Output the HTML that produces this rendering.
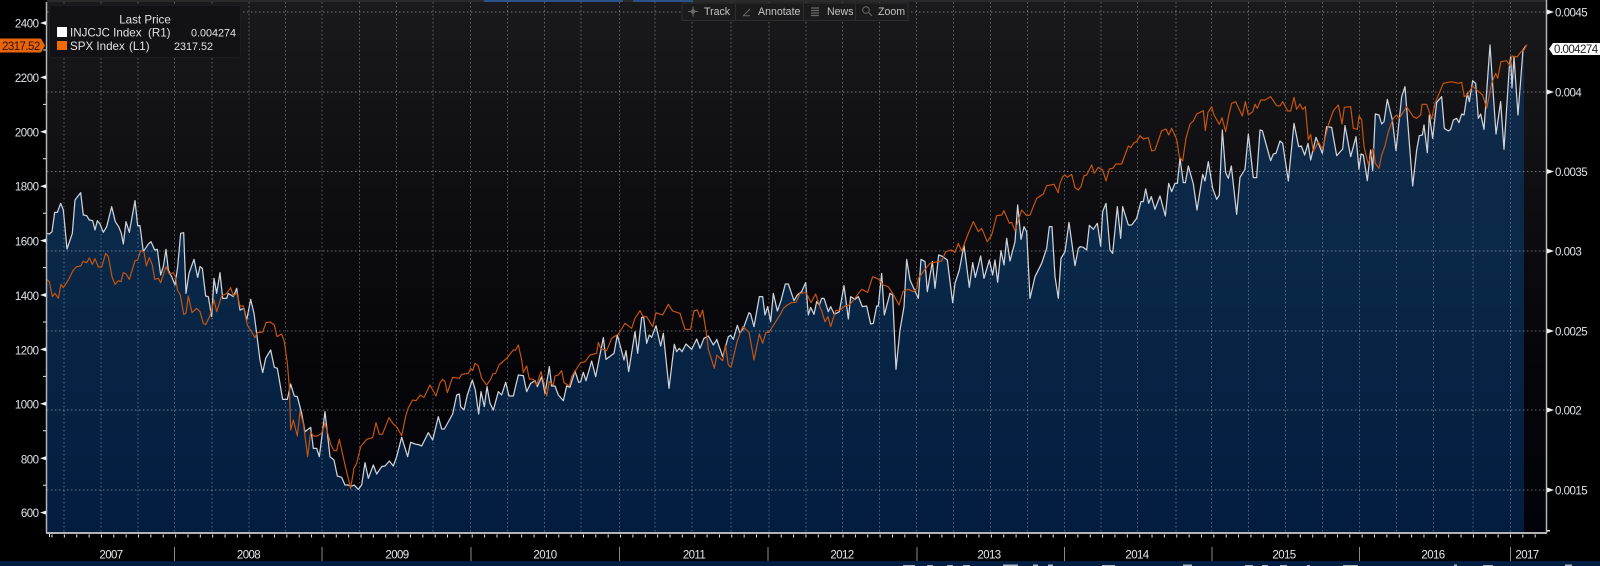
<!DOCTYPE html>
<html><head><meta charset="utf-8"><style>
html,body{margin:0;padding:0;background:#000;width:1600px;height:566px;overflow:hidden}
svg{display:block}
text{font-family:"Liberation Sans",sans-serif}
.a{font-size:11.5px;fill:#dfe3e8;letter-spacing:-.5px}
.y{font-size:11.5px;fill:#e4e6ea;letter-spacing:-.6px;text-anchor:middle}
.t{font-size:10.6px;fill:#c4c4c4}
.l{font-size:10.8px;fill:#e2e2e2}
.m{font-size:11.6px;fill:#e2e2e2}
</style></head><body>
<svg width="1600" height="566" viewBox="0 0 1600 566" xmlns="http://www.w3.org/2000/svg">
<defs>
<linearGradient id="bg" gradientUnits="userSpaceOnUse" x1="0" y1="0" x2="0" y2="532"><stop offset="0" stop-color="#1a1a1c"/><stop offset=".2" stop-color="#131316"/><stop offset=".45" stop-color="#0c0c10"/><stop offset=".7" stop-color="#050509"/><stop offset="1" stop-color="#02030a"/></linearGradient>
<linearGradient id="bl" gradientUnits="userSpaceOnUse" x1="0" y1="40" x2="0" y2="532"><stop offset="0" stop-color="#132a49"/><stop offset=".4" stop-color="#0a2848"/><stop offset="1" stop-color="#021d3f"/></linearGradient>
<clipPath id="c">
<path transform="translate(40 170) scale(.33333)" d="M20 190L28 192 36 185 44 127 52 127 62 100 70 120 81 237 97 190 105 90 122 68 130 135 140 137 148 150 158 152 165 180 172 152 180 162 190 187 200 170 215 110 226 155 236 170 244 190 250 222 258 155 268 187 285 92 293 167 300 167 310 245 325 222 333 215 344 240 352 238 362 315 370 290 378 238 385 300 395 320 405 345 413 290 422 190 431 188 438 370 447 310 462 268 473 322 480 290 487 295 497 378 505 380 515 440 522 325 530 370 540 308 548 385 560 385 565 370 580 380 590 355 600 420 612 415 620 450 632 388 642 430 650 490 660 570 668 608 677 565 692 540 703 592 712 595 728 688 742 688 752 642 763 678 772 680 785 730 795 785 812 772 820 835 830 835 838 860 855 725 870 860 882 870 892 918 905 922 915 945 925 945 932 950 942 945 955 958 965 945 975 878 985 925 1000 885 1010 912 1025 890 1035 888 1048 873 1060 888 1070 860 1085 802 1103 860 1112 817 1125 822 1140 825l6 0V1500H20Z"/>
<path transform="translate(340 260) scale(.33333)" d="M240 556L245 558 265 518 278 540 295 470 305 507 313 507 338 462 350 405 358 402 362 440 372 450 382 405 397 360 406 390 416 462 423 395 433 440 441 380 450 430 460 450 475 395 485 405 497 367 507 408 520 408 535 345 550 347 560 395 572 370 585 362 592 380 605 350 615 400 628 320 635 378 645 378 655 405 670 422 680 378 690 382 705 333 716 367 722 365 730 337 738 362 755 303 767 350 790 233 798 298 822 280 832 225 852 300 858 272 866 335 885 215 893 280 905 172 911 172 920 250 928 225 935 232 948 197 962 258 970 220 987 385 1003 253 1010 275 1018 265 1026 275 1038 252 1055 268 1070 237 1080 265 1092 235 1105 228 1120 255 1130 240l6 0V1500H240Z"/>
<path transform="translate(700 180) scale(.33333)" d="M50 478L68 530 85 470 92 466 100 478 112 436 120 460 130 445 147 398 152 402 162 440 178 350 188 350 195 405 203 380 212 425 220 340 232 393 243 362 256 312 265 312 282 362 292 345 305 335 317 308 325 405 332 382 342 403 350 365 358 375 365 355 372 355 385 395 392 380 403 403 418 395 432 317 445 417 452 350 465 358 475 350 487 380 500 378 512 432 520 430 530 378 535 378 545 280 553 405 570 340 578 345 588 568 600 450 612 380 620 238 630 300 640 322 655 355 663 238 675 245 682 335 697 245 705 325 716 225 725 228 742 240 758 368 765 310 778 270 792 195 808 322 818 248 826 292 842 228 852 295 868 240 878 285 885 240 893 307 903 212 912 255 920 175 930 243 945 185 953 75 963 178 972 140 980 155 990 355 1005 290 1025 250 1040 205 1048 140 1056 140 1065 290 1075 355 1083 235 1095 215 1107 127 1125 257 1135 205l8 0V1500H50Z"/>
<path transform="translate(1060 40) scale(.33333)" d="M60 620L70 622 80 630 88 556 100 568 112 550 122 618 128 515 138 490 150 630 158 640 172 500 182 595 188 500 205 555 215 555 230 535 243 485 250 485 257 447 266 490 274 470 285 508 300 468 316 528 326 430 335 455 345 430 352 430 360 355 370 428 376 428 385 378 400 432 411 510 428 403 435 423 445 365 458 445 470 478 478 465 487 270 497 398 505 415 514 378 530 523 540 412 555 388 565 282 580 413 590 413 600 270 607 272 632 362 640 342 648 340 660 303 668 310 685 423 702 250 716 320 724 318 734 345 744 310 752 360 768 292 787 340 800 260 815 262 830 347 848 327 855 257 872 350 888 290 897 388 903 342 910 345 922 422 932 330 938 392 946 222 957 225 965 252 972 245 982 178 997 240 1008 332 1025 170 1035 140 1058 438 1070 330 1078 287 1087 285 1092 255 1102 338 1108 225 1118 295 1130 187 1145 170 1153 265 1165 273 1172 268 1180 240 1190 235 1197 248 1205 222 1212 225 1222 160 1228 185 1238 122 1247 130 1255 235 1262 222 1272 268 1290 15 1308 282 1322 185 1332 328 1348 80 1352 51 1356 144 1362 51 1374 225 1389 30 1397 18V1500H60Z"/>
</clipPath>
</defs>

<rect width="1600" height="566" fill="#000"/>
<rect x="47" y="0" width="1500" height="532" fill="url(#bg)"/>
<rect x="47" y="0" width="1477" height="532" fill="url(#bl)" clip-path="url(#c)"/>

<!-- top strip -->
<rect x="47" y="0" width="1500" height="2" fill="#2a2a2b"/>
<rect x="484" y="0" width="139" height="2" fill="#2a5489"/>
<rect x="633" y="0" width="60" height="2" fill="#2a5489"/>

<!-- grid -->
<path d="M47 12H1546M47 92H1546M47 171.500H1546M47 251H1546M47 331H1546M47 410H1546M47 490H1546" stroke="#fff" stroke-opacity=".42" stroke-width="1" stroke-dasharray="1.500 2.500" fill="none"/>
<path d="M64 2V532M101 2V532M138 2V532M174.500 2V532M212 2V532M249 2V532M285.500 2V532M322 2V532M359.500 2V532M396.500 2V532M433 2V532M470.500 2V532M507.500 2V532M544.500 2V532M581 2V532M619.500 2V532M655 2V532M692 2V532M731 2V532M769 2V532M806 2V532M842.500 2V532M879.500 2V532M916.500 2V532M953.500 2V532M990.500 2V532M1027.500 2V532M1064.500 2V532M1101 2V532M1137.500 2V532M1176 2V532M1211.500 2V532M1248.500 2V532M1285.500 2V532M1322.500 2V532M1359.500 2V532M1396.500 2V532M1433.500 2V532M1473 2V532M1510.500 2V532" stroke="#fff" stroke-opacity=".33" stroke-width="1" stroke-dasharray="1.500 2.500" fill="none"/>

<!-- white series -->
<g fill="none" stroke="#cfd4da" stroke-width="3.700" stroke-linejoin="round" stroke-linecap="round">
<path transform="translate(40 170) scale(.33333)" d="M20 190L28 192 36 185 44 127 52 127 62 100 70 120 81 237 97 190 105 90 122 68 130 135 140 137 148 150 158 152 165 180 172 152 180 162 190 187 200 170 215 110 226 155 236 170 244 190 250 222 258 155 268 187 285 92 293 167 300 167 310 245 325 222 333 215 344 240 352 238 362 315 370 290 378 238 385 300 395 320 405 345 413 290 422 190 431 188 438 370 447 310 462 268 473 322 480 290 487 295 497 378 505 380 515 440 522 325 530 370 540 308 548 385 560 385 565 370 580 380 590 355 600 420 612 415 620 450 632 388 642 430 650 490 660 570 668 608 677 565 692 540 703 592 712 595 728 688 742 688 752 642 763 678 772 680 785 730 795 785 812 772 820 835 830 835 838 860 855 725 870 860 882 870 892 918 905 922 915 945 925 945 932 950 942 945 955 958 965 945 975 878 985 925 1000 885 1010 912 1025 890 1035 888 1048 873 1060 888 1070 860 1085 802 1103 860 1112 817 1125 822 1140 825"/>
<path transform="translate(340 260) scale(.33333)" d="M240 556L245 558 265 518 278 540 295 470 305 507 313 507 338 462 350 405 358 402 362 440 372 450 382 405 397 360 406 390 416 462 423 395 433 440 441 380 450 430 460 450 475 395 485 405 497 367 507 408 520 408 535 345 550 347 560 395 572 370 585 362 592 380 605 350 615 400 628 320 635 378 645 378 655 405 670 422 680 378 690 382 705 333 716 367 722 365 730 337 738 362 755 303 767 350 790 233 798 298 822 280 832 225 852 300 858 272 866 335 885 215 893 280 905 172 911 172 920 250 928 225 935 232 948 197 962 258 970 220 987 385 1003 253 1010 275 1018 265 1026 275 1038 252 1055 268 1070 237 1080 265 1092 235 1105 228 1120 255 1130 240"/>
<path transform="translate(700 180) scale(.33333)" d="M50 478L68 530 85 470 92 466 100 478 112 436 120 460 130 445 147 398 152 402 162 440 178 350 188 350 195 405 203 380 212 425 220 340 232 393 243 362 256 312 265 312 282 362 292 345 305 335 317 308 325 405 332 382 342 403 350 365 358 375 365 355 372 355 385 395 392 380 403 403 418 395 432 317 445 417 452 350 465 358 475 350 487 380 500 378 512 432 520 430 530 378 535 378 545 280 553 405 570 340 578 345 588 568 600 450 612 380 620 238 630 300 640 322 655 355 663 238 675 245 682 335 697 245 705 325 716 225 725 228 742 240 758 368 765 310 778 270 792 195 808 322 818 248 826 292 842 228 852 295 868 240 878 285 885 240 893 307 903 212 912 255 920 175 930 243 945 185 953 75 963 178 972 140 980 155 990 355 1005 290 1025 250 1040 205 1048 140 1056 140 1065 290 1075 355 1083 235 1095 215 1107 127 1125 257 1135 205 1140 201"/>
<path transform="translate(1060 40) scale(.33333)" d="M60 620L70 622 80 630 88 556 100 568 112 550 122 618 128 515 138 490 150 630 158 640 172 500 182 595 188 500 205 555 215 555 230 535 243 485 250 485 257 447 266 490 274 470 285 508 300 468 316 528 326 430 335 455 345 430 352 430 360 355 370 428 376 428 385 378 400 432 411 510 428 403 435 423 445 365 458 445 470 478 478 465 487 270 497 398 505 415 514 378 530 523 540 412 555 388 565 282 580 413 590 413 600 270 607 272 632 362 640 342 648 340 660 303 668 310 685 423 702 250 716 320 724 318 734 345 744 310 752 360 768 292 787 340 800 260 815 262 830 347 848 327 855 257 872 350 888 290 897 388 903 342 910 345 922 422 932 330 938 392 946 222 957 225 965 252 972 245 982 178 997 240 1008 332 1025 170 1035 140 1058 438 1070 330 1078 287 1087 285 1092 255 1102 338 1108 225 1118 295 1130 187 1145 170 1153 265 1165 273 1172 268 1180 240 1190 235 1197 248 1205 222 1212 225 1222 160 1228 185 1238 122 1247 130 1255 235 1262 222 1272 268 1290 15 1308 282 1322 185 1332 328 1348 80 1352 51 1356 144 1362 51 1374 225 1389 30 1397 18"/>
</g>

<!-- orange series -->
<g fill="none" stroke="#c9550e" stroke-width="3.500" stroke-linejoin="round" stroke-linecap="round">
<path transform="translate(40 170) scale(.33333)" d="M20 328L28 335 37 380 45 370 55 385 63 343 70 353 85 330 100 300 110 290 122 288 130 274 140 278 148 264 157 283 165 266 175 291 185 291 197 250 205 260 216 320 225 343 235 332 243 335 250 308 258 312 268 328 285 272 293 270 302 242 312 245 319 288 328 263 337 285 344 328 355 325 362 338 378 290 388 312 400 308 407 322 412 360 421 375 431 433 438 430 445 378 456 428 470 415 480 425 490 460 497 464 510 437 522 390 530 425 545 378 560 370 572 353 580 378 590 368 600 408 610 408 622 465 645 503 652 488 668 486 678 458 690 456 703 465 711 500 725 492 733 515 742 580 748 650 752 780 760 750 772 798 780 725 790 760 803 860 812 785 820 798 832 798 845 790 855 760 873 825 882 842 890 842 898 808 915 885 932 955 942 895 950 880 962 830 980 808 998 803 1008 758 1018 793 1027 793 1047 743 1060 762 1070 770 1085 797 1098 735 1105 713 1118 690 1128 692 1140 677"/>
<path transform="translate(340 260) scale(.33333)" d="M240 405L252 412 270 375 288 408 300 368 308 358 315 365 322 398 338 352 358 355 365 343 385 340 392 325 398 332 405 310 415 318 425 355 440 375 452 358 458 342 467 340 477 315 500 295 520 270 527 270 535 255 545 300 550 338 560 318 568 357 580 358 590 375 603 335 612 370 620 408 628 365 640 375 645 348 655 345 665 332 672 368 688 378 695 350 715 318 722 308 735 305 750 285 770 280 775 247 782 265 800 272 815 235 835 222 855 190 875 205 885 175 900 152 910 170 920 170 938 200 948 158 968 165 985 133 998 153 1020 160 1035 208 1052 208 1062 152 1072 150 1080 172 1088 150 1100 225 1105 268 1123 325 1130 288"/>
<path transform="translate(700 180) scale(.33333)" d="M50 525L68 542 76 495 85 555 93 562 112 482 128 440 147 457 162 540 178 462 188 490 198 457 207 457 240 405 250 385 262 375 275 368 288 367 300 340 318 338 333 368 347 342 360 382 365 392 375 425 384 410 392 440 407 392 420 390 435 378 448 375 462 358 485 328 503 337 518 290 535 297 550 315 565 320 578 340 597 375 610 333 625 328 640 335 650 325 655 295 672 272 690 250 712 245 725 243 737 215 755 210 765 217 775 190 785 213 805 160 820 125 835 155 845 145 862 185 875 165 890 107 905 105 912 92 928 130 935 127 945 152 965 90 980 107 990 105 1010 55 1030 42 1040 17 1062 13 1075 38"/>
<path transform="translate(1060 40) scale(.33333)" d="M-6 458L0 430 8 410 15 405 22 412 35 403 45 443 55 450 63 440 72 407 80 405 95 375 103 400 115 382 128 390 138 423 148 387 158 385 168 372 185 372 205 318 212 323 222 308 230 305 240 287 250 297 265 293 275 333 285 330 305 272 318 267 326 285 335 265 350 298 358 350 368 363 378 295 390 252 400 243 410 222 430 212 436 272 444 217 455 200 462 225 478 253 486 233 497 275 507 222 515 190 527 185 547 228 556 185 565 225 578 215 585 193 592 205 602 180 615 180 632 170 650 197 660 198 668 185 683 213 692 213 702 172 710 208 720 192 728 208 736 200 745 300 752 283 760 335 775 305 787 328 805 255 820 212 835 195 846 252 853 202 872 200 880 265 892 268 897 228 905 240 912 320 925 373 940 325 946 370 957 385 965 345 975 318 985 275 1000 235 1010 225 1018 235 1040 200 1060 230 1070 235 1082 225 1086 193 1100 193 1115 237 1125 190 1150 130 1175 125 1195 130 1205 127 1213 170 1222 165 1238 138 1250 150 1268 165 1280 205 1295 130 1307 100 1313 115 1323 65 1340 62 1350 78 1356 48 1371 51 1385 33 1392 30 1400 15"/>
</g>

<!-- axes -->
<path d="M46.500 2V533M1546.500 0V533" stroke="#b4b4b4" stroke-width="1.500" fill="none"/>
<rect x="46" y="532" width="1501" height="2" fill="#b4b4b4"/>
<path d="M51.500 536H1546" stroke="#e8e8e8" stroke-width="3" stroke-dasharray="1 11.360" fill="none"/>
<rect x="49" y="534" width="1" height="3" fill="#e8e8e8"/>
<rect x="1547" y="530" width="3" height="1.500" fill="#e8e8e8"/>
<path d="M43 50h3M43 104.400h3M43 158.800h3M43 213.200h3M43 267.600h3M43 322h3M43 376.400h3M43 430.800h3M43 485.200h3" stroke="#e8e8e8" stroke-width="1"/>
<g fill="#f0f0f0">
<path d="M46 21l-6 2 6 2zM46 75.400l-6 2 6 2zM46 129.800l-6 2 6 2zM46 184.200l-6 2 6 2zM46 238.600l-6 2 6 2zM46 293l-6 2 6 2zM46 347.400l-6 2 6 2zM46 401.800l-6 2 6 2zM46 456.200l-6 2 6 2zM46 510.600l-6 2 6 2z"/>
<path d="M1547 9.500l7 2.500-7 2.500zM1547 89.500l7 2.500-7 2.500zM1547 169l7 2.500-7 2.500zM1547 248.500l7 2.500-7 2.500zM1547 328.500l7 2.500-7 2.500zM1547 407.500l7 2.500-7 2.500zM1547 487.500l7 2.500-7 2.500z"/>
</g>

<!-- left labels -->
<g text-anchor="end">
<text class="a" x="38.500" y="27.500">2400</text>
<text class="a" x="38.500" y="82">2200</text>
<text class="a" x="38.500" y="136.500">2000</text>
<text class="a" x="38.500" y="190.500">1800</text>
<text class="a" x="38.500" y="245.500">1600</text>
<text class="a" x="38.500" y="300">1400</text>
<text class="a" x="38.500" y="354.500">1200</text>
<text class="a" x="38.500" y="408.500">1000</text>
<text class="a" x="38.500" y="463.500">800</text>
<text class="a" x="38.500" y="517">600</text>
</g>
<!-- right labels -->
<text class="a" x="1555" y="16.500">0.0045</text>
<text class="a" x="1555" y="96.500">0.004</text>
<text class="a" x="1555" y="176">0.0035</text>
<text class="a" x="1555" y="255.500">0.003</text>
<text class="a" x="1555" y="335.500">0.0025</text>
<text class="a" x="1555" y="414.500">0.002</text>
<text class="a" x="1555" y="494.500">0.0015</text>

<!-- tags -->
<path d="M0 38.500H41L45 45.500 41 52.500H0Z" fill="#e8650a"/>
<text x="2" y="50" style="font-size:11.500px;letter-spacing:-.55px;fill:#2a1200">2317.52</text>
<path d="M1553 43H1600V55H1553L1549 49Z" fill="#fff"/>
<text x="1554" y="53" style="font-size:11.500px;letter-spacing:-.55px;fill:#222">0.004274</text>

<!-- legend -->
<rect x="49.500" y="5.500" width="191" height="52" rx="3" fill="#121216" stroke="#1c1c21"/>
<text class="m" x="145" y="23.500" text-anchor="middle">Last Price</text>
<rect x="57" y="27" width="10" height="10" fill="#fff"/>
<rect x="57" y="41" width="10" height="9" fill="#f26a00"/>
<text class="m" x="70" y="36.500">INJCJC Index</text>
<text class="m" x="148" y="36.500">(R1)</text>
<text class="l" x="191" y="36.500">0.004274</text>
<text class="m" x="70" y="50">SPX Index</text>
<text class="m" x="129" y="50">(L1)</text>
<text class="l" x="174" y="50">2317.52</text>

<!-- toolbar -->
<rect x="682" y="3" width="226" height="17.500" fill="#1b1b1c" stroke="#2e2e2f"/>
<path d="M735.500 3V20M803.500 3V20M855.500 3V20" stroke="#2c2c2d"/>
<g stroke="#6a6a6a" fill="none" stroke-width="1">
<path d="M688 11.500H698M693 6.500V16.500"/>
<circle cx="693" cy="11.500" r="1.800" fill="#6a6a6a"/>
<path d="M743.500 15.500L750 9M743 15.800h7"/>
<path d="M811 8h8M811 10.500h8M811 13h8M811 15.500h8" stroke-width="1.300"/>
<circle cx="866" cy="10" r="3.300"/><path d="M868.500 12.500L872 16"/>
</g>
<text class="t" x="704" y="15">Track</text>
<text class="t" x="758" y="15">Annotate</text>
<text class="t" x="827" y="15">News</text>
<text class="t" x="878" y="15">Zoom</text>

<!-- x axis -->
<path d="M174.500 547V561M322 547V561M471 547V561M619.500 547V561M768 547V561M917 547V561M1064.500 547V561M1212 547V561M1359.500 547V561M1510.500 547V561" stroke="#8a8a8a" stroke-width="1"/>
<text class="y" x="111" y="558.500">2007</text>
<text class="y" x="248.500" y="558.500">2008</text>
<text class="y" x="397" y="558.500">2009</text>
<text class="y" x="545" y="558.500">2010</text>
<text class="y" x="694" y="558.500">2011</text>
<text class="y" x="842" y="558.500">2012</text>
<text class="y" x="989" y="558.500">2013</text>
<text class="y" x="1137" y="558.500">2014</text>
<text class="y" x="1284" y="558.500">2015</text>
<text class="y" x="1433" y="558.500">2016</text>
<text class="y" x="1527" y="558.500">2017</text>

<!-- bottom bar -->
<rect x="0" y="561" width="1600" height="5" fill="#021d42"/>
<g fill="#aeb6c2">
<rect x="903" y="565" width="12" height="1"/><rect x="927" y="565" width="6" height="1"/><rect x="947" y="565" width="6" height="1"/><rect x="963" y="565" width="7" height="1"/>
<rect x="1003" y="564.500" width="15" height="1.500"/><rect x="1033" y="564.500" width="5" height="1.500"/><rect x="1048" y="564.500" width="5" height="1.500"/>
<rect x="1102" y="565" width="13" height="1"/><rect x="1183" y="564.500" width="9" height="1.500"/>
<rect x="1245" y="565" width="8" height="1"/><rect x="1262" y="565" width="6" height="1"/><rect x="1280" y="565" width="7" height="1"/><rect x="1307" y="565" width="3" height="1"/>
<rect x="1343" y="565" width="15" height="1"/><rect x="1454" y="564.500" width="3" height="1.500"/><rect x="1483" y="565" width="10" height="1"/><rect x="1565" y="564.500" width="7" height="1.500"/>
</g>
</svg>
</body></html>
